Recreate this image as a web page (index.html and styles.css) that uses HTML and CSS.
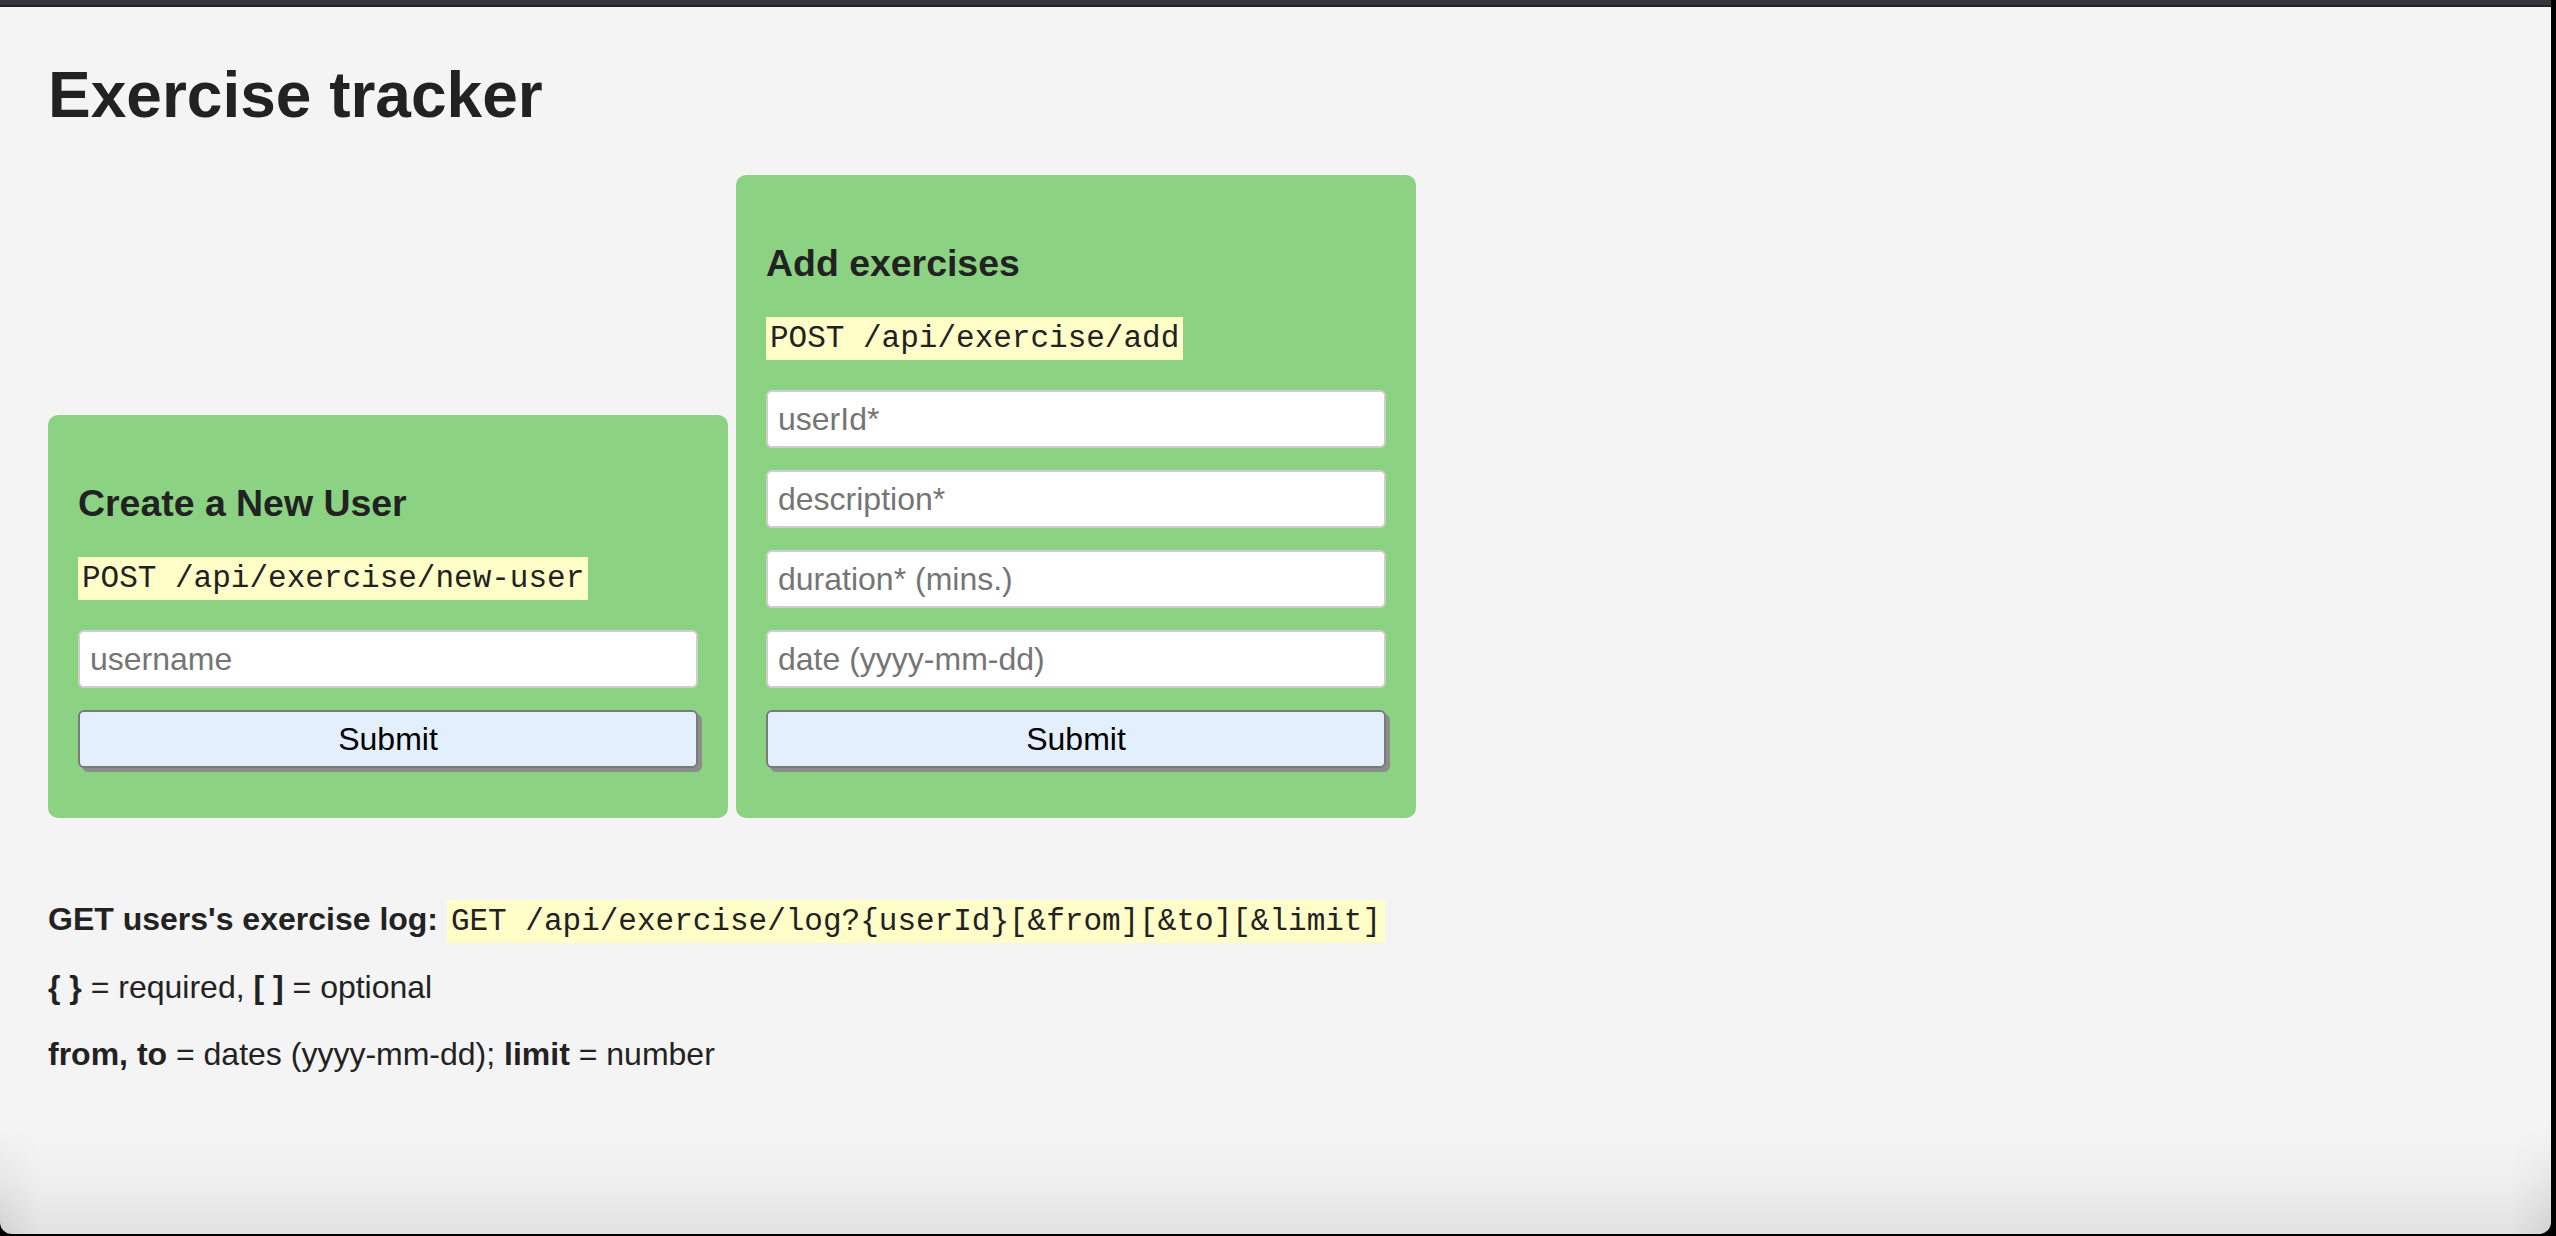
FILE: index.html
```html
<!DOCTYPE html>
<html lang="en">
<head>
<meta charset="utf-8">
<title>Exercise Tracker</title>
<link rel="stylesheet" href="styles.css">
</head>
<body>
<div class="window">
  <div class="topbar"></div>
  <main class="page">
    <h1 class="title">Exercise tracker</h1>
    <div class="forms">
      <form class="card" action="/api/exercise/new-user" method="post">
        <h3 class="card-title">Create a New User</h3>
        <p class="endpoint"><code class="code">POST /api/exercise/new-user</code></p>
        <input class="field" type="text" name="username" placeholder="username">
        <button class="submit" type="submit">Submit</button>
      </form>
      <form class="card" action="/api/exercise/add" method="post">
        <h3 class="card-title">Add exercises</h3>
        <p class="endpoint"><code class="code">POST /api/exercise/add</code></p>
        <input class="field" type="text" name="userId" placeholder="userId*">
        <input class="field" type="text" name="description" placeholder="description*">
        <input class="field" type="text" name="duration" placeholder="duration* (mins.)">
        <input class="field" type="text" name="date" placeholder="date (yyyy-mm-dd)">
        <button class="submit" type="submit">Submit</button>
      </form>
    </div>
    <p class="note"><strong>GET users's exercise log:</strong> <code class="code">GET /api/exercise/log?{userId}[&amp;from][&amp;to][&amp;limit]</code></p>
    <p class="note"><strong>{ }</strong> = required, <strong>[ ]</strong> = optional</p>
    <p class="note"><strong>from, to</strong> = dates (yyyy-mm-dd); <strong>limit</strong> = number</p>
  </main>
</div>
</body>
</html>
```

FILE: styles.css
```css
html, body {
  margin: 0;
  padding: 0;
}

body {
  background: #000;
  height: 1236px;
  overflow: hidden;
  font-family: "Liberation Sans", Arial, Helvetica, sans-serif;
  font-size: 32px;
  color: #222;
}

.window {
  position: relative;
  width: 2551px;
  height: 1234px;
  background: #f4f4f4;
  border-radius: 0 0 12px 12px;
  overflow: hidden;
}

.window::after {
  content: "";
  position: absolute;
  left: 0;
  right: 0;
  bottom: 0;
  height: 100px;
  background: linear-gradient(to bottom, rgba(0, 0, 0, 0) 0%, rgba(0, 0, 0, 0.02) 45%, rgba(0, 0, 0, 0.075) 100%);
  pointer-events: none;
}

.window::before {
  content: "";
  position: absolute;
  left: 0;
  right: 0;
  bottom: 0;
  height: 110px;
  background: linear-gradient(to right, rgba(0, 0, 0, 0.07) 0, rgba(0, 0, 0, 0) 40px, rgba(0, 0, 0, 0) calc(100% - 40px), rgba(0, 0, 0, 0.07) 100%);
  -webkit-mask-image: linear-gradient(to bottom, transparent 0%, #000 100%);
  mask-image: linear-gradient(to bottom, transparent 0%, #000 100%);
  pointer-events: none;
}

.topbar {
  height: 7px;
  box-sizing: border-box;
  background: #35363a;
  border-bottom: 2px solid #242426;
}

.page {
  padding: 8px 48px 0;
}

.title {
  font-size: 64px;
  font-weight: bold;
  margin: 43px 0 43px;
}

.forms {
  display: flex;
  align-items: flex-end;
  gap: 8px;
  margin-bottom: 83px;
}

.card {
  width: 680px;
  box-sizing: border-box;
  padding: 30px 30px 50px;
  background: #8bd383;
  border-radius: 10px;
}

.card-title {
  font-size: 37.44px;
  font-weight: bold;
  margin: 37.44px 0 0;
}

.endpoint {
  margin: 33px 0 34px;
}

.code {
  font-family: "Courier New", "Nimbus Mono PS", "Liberation Mono", monospace;
  font-size: 31px;
  background: #fffdc8;
  padding: 4px;
}

.field {
  display: block;
  width: 100%;
  height: 58px;
  box-sizing: border-box;
  margin: 0 0 22px;
  padding: 0 10px;
  border: 2px solid #cfcfcf;
  border-radius: 6px;
  background: #fff;
  font-family: "Liberation Sans", Arial, Helvetica, sans-serif;
  font-size: 32px;
  color: #222;
  outline: none;
}

.field::placeholder {
  color: #757575;
}

.submit {
  display: block;
  width: 100%;
  height: 58px;
  box-sizing: border-box;
  margin: 0;
  padding: 0;
  border: 2px solid #7a7a7a;
  border-radius: 6px;
  background: #e3effd;
  box-shadow: 4px 4px 0 #8c8c8c;
  font-family: "Liberation Sans", Arial, Helvetica, sans-serif;
  font-size: 32px;
  color: #000;
}

.note {
  margin: 30px 0;
}

.note strong {
  font-weight: bold;
}
```
